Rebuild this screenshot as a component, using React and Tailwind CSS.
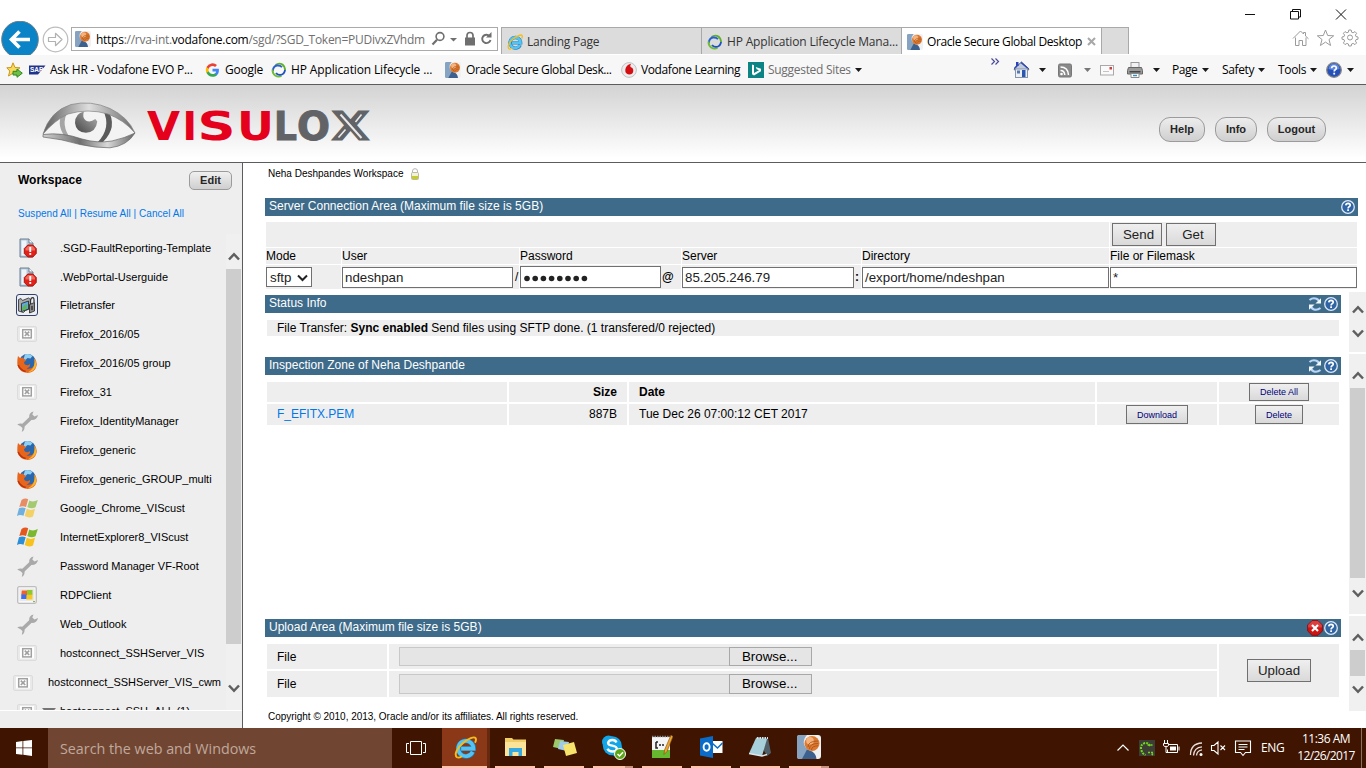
import React from "react";

const segoe = "font-['Open_Sans','Noto_Sans',sans-serif]";

/* ---------- icons ---------- */
function Oracle({ size = 16 }) {
  return (
    <svg width={size} height={size} viewBox="0 0 24 24" className="shrink-0">
      <rect width="24" height="24" rx="3" fill="#f0f1f3" />
      <path d="M2 0h8q-4 4-3 9 .8 3.500 3.500 5l.5 10H2a2 2 0 0 1-2-2V2a2 2 0 0 1 2-2z" fill="#86a3c2" />
      <path d="M10 14.500l3 1q6 2 6.500 8.500H5z" fill="#3c618e" />
      <circle cx="15" cy="8.500" r="7.500" fill="#dd7a31" />
      <circle cx="13" cy="5.800" r="3.800" fill="#f5b27c" />
      <path d="M11 12q0-6 10-6M12.500 13.800q0-5.300 8.800-5.300M14.500 15q0-4 6.500-4.200" stroke="#a34f16" strokeWidth=".8" fill="none" />
    </svg>
  );
}
function IE({ size = 16 }) {
  return (
    <svg width={size} height={size} viewBox="0 0 24 24" className="shrink-0" fill="none">
      <path d="M19.800 16.500A8 8 0 1 1 20.500 13.200H7" stroke="#1f7fbd" strokeWidth="5" />
      <path d="M19.500 16.600A8 8 0 1 1 20.300 13.200H7.500" stroke="#55c3f2" strokeWidth="3.800" />
      <path d="M3.300 22.300C-.5 19.800 3.500 12 9.500 7.200 15 2.800 21 .2 22.500 2.200c.8 1.200.4 3-.6 4.800" stroke="#f5bd1c" strokeWidth="2" />
      <path d="M3.300 22.300q1.700 1 5-1.200" stroke="#f5bd1c" strokeWidth="1.800" />
    </svg>
  );
}
function HP() {
  return (
    <svg width="16" height="16" viewBox="0 0 16 16" className="shrink-0" fill="none">
      <path d="M4.500 3Q8 .5 11.500 2.500q2.800 2.300 2.500 5.500" stroke="#5fae2c" strokeWidth="1.900" />
      <path d="M14 8q-.5 4.200-4.500 5-3 .2-4.500-2" stroke="#1e50c8" strokeWidth="1.900" />
      <path d="M2 9q-.2-4.500 4-5.500 3-.4 5 1.700" stroke="#2b5fd6" strokeWidth="1.900" />
      <path d="M1.500 7.500Q1.500 11.500 4.200 13.500q3 2 6.300.5" stroke="#6fbb35" strokeWidth="1.900" />
    </svg>
  );
}
function Caret({ color = "#1a1a1a" }) {
  return (
    <svg width="7" height="4" viewBox="0 0 7 4" className="shrink-0">
      <path d="M0 0h7L3.500 4z" fill={color} />
    </svg>
  );
}
function HelpDot({ size = 14 }) {
  return (
    <svg width={size} height={size} viewBox="0 0 14 14" className="shrink-0">
      <circle cx="7" cy="7" r="6.300" fill="#2f64a5" stroke="#dde8f5" strokeWidth="1.300" />
      <path d="M4.800 5.400Q5 3.300 7.100 3.300 9.300 3.500 9.200 5.300 9 6.300 7.800 6.900 7.100 7.300 7.100 8.500" stroke="#fff" strokeWidth="1.700" fill="none" />
      <rect x="6.200" y="9.300" width="1.800" height="1.700" fill="#fff" />
    </svg>
  );
}
function Refresh() {
  return (
    <svg width="14" height="14" viewBox="0 0 14 14" className="shrink-0" fill="none">
      <path d="M1.500 3Q5 .3 8.500 1.800 10 2.600 11 4" stroke="#b9d6f7" strokeWidth="2.200" />
      <path d="M13 1.200v5.200H7.400z" fill="#f0f7ff" />
      <path d="M12.500 11Q9 13.700 5.500 12.200 4 11.400 3 10" stroke="#b9d6f7" strokeWidth="2.200" />
      <path d="M1 12.800V7.600h5.600z" fill="#f0f7ff" />
    </svg>
  );
}
function ErrorDot() {
  return (
    <svg width="16" height="16" viewBox="0 0 16 16" className="shrink-0">
      <path d="M5 .7h6L15.300 5v6L11 15.300H5L.7 11V5z" fill="#cf1414" stroke="#8d0d0d" />
      <path d="M5 .9h6L15 5v2.500H1V5z" fill="#e4585a" opacity=".6" />
      <path d="M5 5l6 6M11 5l-6 6" stroke="#fff" strokeWidth="2.200" />
    </svg>
  );
}
function Chevron({ up }) {
  return (
    <svg width="12" height="9" viewBox="0 0 12 9" className="shrink-0">
      <path d={up ? "M1 7.500L6 2.200l5 5.300" : "M1 1.500l5 5.300 5-5.300"} fill="none" stroke="#5f5f5f" strokeWidth="2.500" />
    </svg>
  );
}
function DocIcon() {
  return (
    <svg width="20" height="20" viewBox="0 0 20 20">
      <path d="M3 1h9l4 4v14H3z" fill="#b9c9d9" stroke="#6b8094" />
      <path d="M4.500 2.500h5v15h-5z" fill="#edf4fa" />
      <path d="M12 1v4h4" fill="#fff" stroke="#6b8094" />
      <path d="M10.800 7h5l3.400 3.500v5L15.800 19h-5l-3.500-3.500v-5z" fill="#e32119" stroke="#a8140e" />
      <path d="M11 8h4.500l2.500 2.500v2H8.500v-2z" fill="#f06a5e" />
      <rect x="12.300" y="9" width="1.900" height="5" fill="#fff" />
      <rect x="12.300" y="15" width="1.900" height="1.900" fill="#fff" />
    </svg>
  );
}
function TransferIcon() {
  return (
    <svg width="22" height="22" viewBox="0 0 22 22">
      <rect x=".5" y=".5" width="21" height="21" rx="2.500" fill="#eceef2" stroke="#33406e" />
      <path d="M2.500 5.500l2.500-1 1.500 2 6-2.500 2 1.500v9l-5 2-2 2-5-1.500z" fill="#a9abab" stroke="#3a3a3a" strokeWidth=".9" />
      <path d="M5.500 9.500l7-2.500v8l-7 2.500z" fill="#5faae6" stroke="#222" strokeWidth=".8" />
      <path d="M6 15q1-4 5-5v4.800L6 16.700z" fill="#63b552" />
      <path d="M13.500 10.500l5-2v8.500l-5 2z" fill="#8b8b8b" stroke="#222" strokeWidth=".8" />
      <path d="M14.500 10V6.500Q15 3.500 17 3.700q1.300.3 1 4.800" fill="none" stroke="#333" strokeWidth="1.300" />
      <path d="M16 12v4" stroke="#222" strokeWidth="1.200" />
    </svg>
  );
}
function BrokenIcon() {
  return (
    <svg width="20" height="16" viewBox="0 0 20 16">
      <rect x=".5" y=".5" width="19" height="15" rx="1.500" fill="#e9e9e9" stroke="#dcdcdc" />
      <rect x="3" y="2" width="14" height="11.500" fill="#fff" />
      <rect x="5.700" y="3.700" width="8.600" height="8.200" fill="none" stroke="#a0a0a0" strokeWidth="1.500" />
      <path d="M7.800 5.600l4.400 4.400M12.200 5.600L7.800 10" stroke="#a0a0a0" strokeWidth="1.700" />
    </svg>
  );
}
function FirefoxIcon() {
  return (
    <svg width="20" height="20" viewBox="0 0 20 20">
      <circle cx="10.500" cy="9.500" r="8.500" fill="#2a67ad" />
      <path d="M8 1.500q4-1.500 7.500 1.500l-2 2.500-3-.5-2 2-2-1z" fill="#8fd0f2" />
      <path d="M1 3l2 2 3-.6 1 1.800L9.500 7 7 9.300q.2 3 3.500 3 1.500-.1 2.500-1.200.5 3.500-3.500 4.300 5 1.200 7.800-2.700 1.500-3-.3-7.700 3.500 3.500 2.500 8-1.700 6.500-8.500 6.900Q2 19.400.4 12 0 7 1 3z" fill="#e8661c" />
      <path d="M17.300 5.500q3 4 1.300 9-3 4.500-8.100 5 5.500-3 6.500-7 .8-3.500.3-7z" fill="#f8b62c" />
      <path d="M1.200 12q2 5 7.500 6.500" fill="none" stroke="#b8330d" strokeWidth="1.500" />
    </svg>
  );
}
function WrenchIcon() {
  return (
    <svg width="21" height="21" viewBox="0 0 21 21">
      <path d="M5 15.500L15 6" stroke="#a9a9a9" strokeWidth="3.600" />
      <path d="M16.500.5q-5 1.300-4.200 6l2.500 2.500q5.200 0 6.200-5l-3.500 1.500-2.200-1.900zM.2 13.500q3.800-2.200 7 .4 1.500 4.500-2.400 7L5.500 17 3.500 15.300z" fill="#a9a9a9" />
    </svg>
  );
}
function WindowsFlag({ faded }) {
  return (
    <svg width="21" height="20" viewBox="0 0 21 20" opacity={faded ? 0.65 : 1}>
      <path d="M4.500 2Q8-.4 11.200 1.200L9 9Q5.500 7.300 2.300 9z" fill="#e4581d" />
      <path d="M12.300 2.400Q16 4.600 20.800 2L18.500 9.200q-4 2.300-8.200-.2z" fill="#7cb82f" />
      <path d="M2 10.300Q5.300 8.500 8.700 10.300l-2.200 7.500Q3 16.200-.1 18z" fill="#2c8fd6" />
      <path d="M9.800 10.800Q13.800 13 18 10.800L16 18.500q-4 2-8.300-.5z" fill="#f7c21e" />
    </svg>
  );
}
function RdpIcon() {
  return (
    <svg width="20" height="18" viewBox="0 0 20 18">
      <rect x=".7" y=".7" width="18.600" height="16.600" rx="1.500" fill="#f8f8f8" stroke="#bdbdbd" strokeWidth="1.300" />
      <rect x="2.500" y="2.500" width="15" height="12.500" fill="#e8e8e8" />
      <path d="M4.800 4.500H10V9H4.300z" fill="#f0622b" />
      <path d="M10 4h5.500v5H10z" fill="#8fc82c" />
      <path d="M4.300 8.500H10V13H4.200z" fill="#3c6df0" />
      <path d="M9.500 8.800h6v4.700H9.200z" fill="#f7c524" />
      <rect x="16" y="15" width="2" height="1.200" fill="#8db94a" />
    </svg>
  );
}

/* ---------- browser chrome ---------- */
function BrowserTop() {
  return (
    <div className={`flex h-[55px] shrink-0 items-end bg-white ${segoe}`}>
      <div className="flex h-[34px] w-[71px] shrink-0">
        <svg width="71" height="34" viewBox="0 0 71 34">
          <circle cx="20" cy="18.500" r="18.300" fill="#0a84c6" stroke="#6b7c86" strokeWidth="1" />
          <path d="M30 18.500H12M19.500 10.500l-8 8 8 8" fill="none" stroke="#fff" strokeWidth="3.600" />
          <circle cx="55.500" cy="18.500" r="12.300" fill="#fff" stroke="#bcbcbc" strokeWidth="1.200" />
          <path d="M48.500 16.500h7v-4.200l6.500 6.200-6.500 6.200v-4.200h-7z" fill="#fff" stroke="#b2b2b2" strokeWidth="1.200" strokeLinejoin="round" />
        </svg>
      </div>
      <div className="mb-[4px] flex h-[24px] w-[427px] shrink-0 items-center border border-[#aaaaaa] pl-[3px]">
        <Oracle />
        <div className="ml-[5px] w-[332px] shrink-0 pt-px text-[12px] tracking-[-0.27px] whitespace-nowrap text-[#707070]">
          <span className="text-black">https</span>://rva-int.<span className="text-black">vodafone.com</span>/sgd/?SGD_Token=PUDivxZVhdm
        </div>
        <svg width="70" height="22" viewBox="0 0 70 22" className="shrink-0">
          <circle cx="12" cy="8.500" r="3.900" fill="none" stroke="#6f6f6f" strokeWidth="1.600" />
          <path d="M9 11.800L4.500 16.500" stroke="#6f6f6f" strokeWidth="2.200" />
          <path d="M22 10h7L25.500 13.500z" fill="#6f6f6f" />
          <rect x="37" y="9.500" width="10" height="8" fill="#6f6f6f" />
          <path d="M39 10V7.500q0-3 3-3t3 3V10" fill="none" stroke="#6f6f6f" strokeWidth="1.700" />
          <path d="M61.500 8A4.200 4.200 0 1 0 62.500 12" fill="none" stroke="#6f6f6f" strokeWidth="1.900" />
          <path d="M63.500 4v5.500H58z" fill="#6f6f6f" />
        </svg>
      </div>
      <div className="mb-[1px] ml-[3px] flex h-[27px] w-[628px] shrink-0 border-t border-l border-[#a9a9a9] text-[12px] text-[#333]">
        <div className="flex w-[200px] shrink-0 items-center gap-[4px] border-r border-[#a9a9a9] bg-[#dcdcdc] pt-px pl-[5px]">
          <IE />
          <span className="tracking-[-0.2px] whitespace-nowrap">Landing Page</span>
        </div>
        <div className="flex w-[200px] shrink-0 items-center gap-[4px] border-r border-[#a9a9a9] bg-[#dcdcdc] pt-px pl-[5px]">
          <HP />
          <span className="tracking-[-0.17px] whitespace-nowrap">HP Application Lifecycle Mana...</span>
        </div>
        <div className="flex w-[200px] shrink-0 items-center gap-[4px] border-r border-[#a9a9a9] bg-white pt-px pl-[5px] text-black">
          <Oracle />
          <span className="w-[156px] shrink-0 tracking-[-0.4px] whitespace-nowrap">Oracle Secure Global Desktop</span>
          <svg width="9" height="9" viewBox="0 0 9 9" className="shrink-0"><path d="M1 1l7 7M8 1L1 8" stroke="#a8a8a8" strokeWidth="2.100" /></svg>
        </div>
        <div className="w-[27px] shrink-0 border-r border-[#a9a9a9] bg-[#dcdcdc]" />
      </div>
      <div className="flex h-[55px] grow flex-col items-end">
        <svg width="130" height="28" viewBox="0 0 130 28" fill="none" stroke="#111">
          <path d="M9 14.500h10M54.500 11.500h8v7.500h-8zM56.500 11.500v-2h8v7.500h-2M100 9.500l10 10M110 9.500l-10 10" />
        </svg>
        <svg width="78" height="24" viewBox="0 0 78 24" fill="none" stroke="#9b9b9b">
          <path d="M5 10.500L12.500 3l3 3V4.500h2V8l3 2.800M7.500 9.500v8H11v-5h3.500v5H18v-8" />
          <path d="M37.500 2l2.200 5.500 6 .3-4.700 3.700 1.600 6-5.100-3.400-5.100 3.400 1.600-6-4.700-3.700 6-.3z" />
          <circle cx="62" cy="9.500" r="2.500" />
          <path d="M60.800 2h2.400l.4 2.200 1.500.6 1.900-1.200 1.600 1.700-1.200 1.800.6 1.500 2 .4v2.200l-2 .4-.6 1.500 1.200 1.800-1.600 1.700-1.900-1.200-1.500.6-.4 2h-2.400l-.4-2-1.500-.6-1.900 1.200-1.600-1.700 1.200-1.800-.6-1.500-2-.4V9l2-.4.600-1.500-1.200-1.800L57 3.600l1.900 1.200 1.500-.6z" />
        </svg>
      </div>
    </div>
  );
}

function Favorites() {
  return (
    <div className={`flex h-[30px] shrink-0 items-center border-b border-[#5c5c5c] bg-[#f7f7f7] text-[12px] whitespace-nowrap text-black ${segoe}`}>
      <div className="flex w-[29px] shrink-0 pl-[6px]">
        <svg width="17" height="16" viewBox="0 0 17 16">
          <path d="M7 .8l2 4.700 5 .3-3.800 3.200 1.300 5L7 11.200l-4.500 2.800 1.300-5L.8 5.800l4.400-.3z" fill="#fbd95d" stroke="#c99719" />
          <path d="M7 9.300h4V7l5.300 4.200L11 15.300V13H7z" fill="#6cc04a" stroke="#2d8a21" />
        </svg>
      </div>
      <div className="flex w-[176px] shrink-0 items-center">
        <svg width="17" height="10" viewBox="0 0 17 10" className="mr-[4px] shrink-0">
          <path d="M0 .5h16.500L9 9.500H0z" fill="#22338c" />
          <text x="1" y="7" fontSize="6.500" fontWeight="bold" fill="#fff" fontFamily="Liberation Sans">SAP</text>
        </svg>
        <span className="tracking-[-0.24px]">Ask HR - Vodafone EVO P...</span>
      </div>
      <div className="flex w-[66px] shrink-0 items-center gap-[5px]">
        <svg width="15" height="14" viewBox="0 0 24 24" className="shrink-0">
          <path fill="#4285f4" d="M23 12.300c0-.8-.1-1.600-.2-2.300H12v4.500h6.200a5.300 5.300 0 0 1-2.300 3.500v3h3.700c2.200-2 3.400-5 3.400-8.700z" />
          <path fill="#34a853" d="M12 23.500c3 0 5.700-1 7.600-2.700l-3.700-2.900c-1 .7-2.300 1.100-3.900 1.100-3 0-5.500-2-6.400-4.700H1.800v3A11.500 11.500 0 0 0 12 23.500z" />
          <path fill="#fbbc05" d="M5.600 14.300a7 7 0 0 1 0-4.500v-3H1.800a11.500 11.500 0 0 0 0 10.500z" />
          <path fill="#ea4335" d="M12 5.200c1.700 0 3.200.6 4.400 1.700l3.300-3.300A11.500 11.500 0 0 0 1.800 6.900l3.800 2.900C6.500 7.200 9 5.200 12 5.200z" />
        </svg>
        <span className="tracking-[-0.25px]">Google</span>
      </div>
      <div className="flex w-[174px] shrink-0 items-center gap-[4px]">
        <HP />
        <span className="tracking-[-0.13px]">HP Application Lifecycle ...</span>
      </div>
      <div className="flex w-[176px] shrink-0 items-center gap-[5px]">
        <Oracle />
        <span className="tracking-[-0.4px]">Oracle Secure Global Desk...</span>
      </div>
      <div className="flex w-[127px] shrink-0 items-center gap-[4px]">
        <svg width="16" height="16" viewBox="0 0 16 16" className="shrink-0">
          <circle cx="8" cy="8" r="7.400" fill="#ececec" stroke="#c2c2c2" />
          <path d="M10 1.800Q5 3 4.300 7.500 4 12 8 12.500q4.500 0 4.300-4.500Q12 5.700 9.500 5 8.800 3.500 10 1.800z" fill="#d40f14" />
        </svg>
        <span className="tracking-[-0.38px]">Vodafone Learning</span>
      </div>
      <div className="flex w-[243px] shrink-0 items-center gap-[4px] text-[#6d6d6d]">
        <svg width="16" height="16" viewBox="0 0 16 16" className="shrink-0">
          <rect width="16" height="16" fill="#0c8484" />
          <path d="M4 2.500l2 .7V11l5-2.700-2.300-1-1-2.300L13 6.800v2.500L6 13.500l-2-1.300z" fill="#fff" />
        </svg>
        <span className="tracking-[-0.3px]">Suggested Sites</span>
        <Caret />
      </div>
      <div className="flex h-full w-[22px] shrink-0">
        <svg width="9" height="8" viewBox="0 0 9 8" className="mt-[3px]"><path d="M.5 .5l3 3-3 3M4.500 .5l3 3-3 3" fill="none" stroke="#4a4a9c" strokeWidth="1.200" /></svg>
      </div>
      <svg width="140" height="20" viewBox="1013 60 140 20" className="shrink-0">
        <path d="M1014 69l7.500-7 7.500 7-1 1.500h-13z" fill="#c1cbdc" stroke="#53607a" />
        <rect x="1016" y="62" width="2.500" height="4" fill="#2a42c0" />
        <path d="M1014.500 68.500l3.500-4M1021 62.500l7 6" stroke="#2f48b8" strokeWidth="1.500" />
        <rect x="1015.500" y="69" width="12" height="8.500" fill="#eceff5" stroke="#8894ab" />
        <rect x="1022" y="70" width="3.500" height="7" fill="#2a58b0" />
        <rect x="1017" y="70.500" width="3" height="3" fill="#5878b0" />
        <path d="M1039 68h7l-3.500 4z" fill="#1a1a1a" />
        <rect x="1058.500" y="64" width="13" height="13" rx="1.500" fill="#8a8a8a" stroke="#777" />
        <circle cx="1061.500" cy="74" r="1.300" fill="#fff" />
        <path d="M1060.500 70.500q4 0 4.300 4.500M1060.500 67q7.500 0 8 8" fill="none" stroke="#fff" strokeWidth="1.500" />
        <path d="M1084 68h7l-3.500 4z" fill="#777" />
        <rect x="1100.500" y="65.500" width="13" height="9.500" fill="#fafafa" stroke="#a9a9a9" />
        <path d="M1103 71.500h6" stroke="#c4c4c4" />
        <rect x="1109.500" y="67" width="2.500" height="2.500" fill="#d23c3c" />
        <rect x="1131" y="62.500" width="8" height="6" fill="#f2f2f2" stroke="#999" />
        <path d="M1128.500 67.500h13l1 3v3.500h-15v-3.500z" fill="#9a9a9a" stroke="#666" />
        <rect x="1129.500" y="71" width="11" height="1.500" fill="#444" />
        <path d="M1131 73.500h8v4h-8z" fill="#fff" stroke="#888" />
        <path d="M1133 75.500h4" stroke="#3590c8" strokeWidth="1.500" />
      </svg>
      <div className="flex w-[19px] shrink-0"><Caret /></div>
      <div className="flex w-[50px] shrink-0 items-center justify-between pr-[13px]"><span className="tracking-[-0.5px]">Page</span><Caret /></div>
      <div className="flex w-[56px] shrink-0 items-center justify-between pr-[13px]"><span className="tracking-[-0.35px]">Safety</span><Caret /></div>
      <div className="flex w-[48px] shrink-0 items-center justify-between pr-[9px]"><span className="tracking-[-0.35px]">Tools</span><Caret /></div>
      <svg width="16" height="16" viewBox="0 0 16 16" className="mr-[5px] shrink-0">
        <circle cx="8" cy="8" r="7.300" fill="#2450b8" stroke="#868686" strokeWidth="1.300" />
        <path d="M2.500 7a5.500 5.500 0 0 1 11 0Q8 9 2.500 7z" fill="#5d86dc" />
        <path d="M5.600 6.300Q5.800 4 8 4t2.400 2Q10.400 7 9.200 7.700 8.200 8.300 8.200 9.500" fill="none" stroke="#fff" strokeWidth="1.700" />
        <rect x="7.300" y="10.700" width="1.800" height="1.800" fill="#fff" />
      </svg>
      <Caret />
    </div>
  );
}

/* ---------- site header ---------- */
function Pill({ children, className }) {
  return (
    <div className={`flex h-[25px] items-center justify-center rounded-[11px] border border-[#9b9b9b] bg-linear-to-b from-[#ededed] to-[#cfcfcf] text-[11px] font-bold text-[#262626] ${className}`}>{children}</div>
  );
}
function Header() {
  return (
    <div className="flex h-[78px] shrink-0 items-center justify-between border-b border-[#5b5c60] bg-linear-to-b from-[#d3d3d3] to-white to-95%">
      <svg width="340" height="60" viewBox="40 93 340 60" className="ml-[40px]">
        <defs>
          <linearGradient id="lid" x1="0" x2="1" y1="0" y2="0">
            <stop offset="0" stopColor="#5c5c5c" /><stop offset=".5" stopColor="#dedede" /><stop offset="1" stopColor="#6a6a6a" />
          </linearGradient>
          <linearGradient id="low" x1="0" x2="1" y1="0" y2="0">
            <stop offset="0" stopColor="#cfcfcf" /><stop offset=".4" stopColor="#6f6f6f" /><stop offset=".7" stopColor="#d8d8d8" /><stop offset="1" stopColor="#666" />
          </linearGradient>
          <linearGradient id="pupil" x1="0" x2="1" y1="1" y2="0">
            <stop offset="0" stopColor="#444" /><stop offset="1" stopColor="#b5b5b5" />
          </linearGradient>
        </defs>
        <path d="M44 133Q56 116 71 110.500 90 105 106 110.500 122 116 134 132 124 139 110 141 96 143 80 138 62 132 44 133z" fill="#f3f3f3" />
        <path d="M62 112q-6 13 4 25l5 1q-11-14-3-28z" fill="#a5a5a5" />
        <path d="M103 109q9 18-6 33l6-1q15-15 5-32z" fill="#5b5b5b" />
        <path d="M43 133Q50 110 71 103.500 91 99 110 107.500 128 116 135 132 124 119 108 113 88 107 68 113 55 119 43 133z" fill="url(#lid)" stroke="#838383" strokeWidth=".7" />
        <path d="M43 133.500Q62 131 82 138 97 142.500 112 140 125 137 135 132 127 145 110 146.800 96 147 80 143.500 62 138 43 136z" fill="url(#low)" stroke="#666" strokeWidth=".7" />
        <path d="M84 110.500q-9 2-9 11.500 1 9.500 11 9.800 10-.6 11.300-11.300l-2-2.500q-5 4-9.500 1.500-4-3.500-1.800-9z" fill="url(#pupil)" />
        <g fontFamily="DejaVu Sans" fontWeight="bold" fontSize="39" fill="#e5001c">
          <text x="147" y="138.900" textLength="33" lengthAdjust="spacingAndGlyphs">V</text>
          <text x="182.500" y="138.900">I</text>
          <text x="197.500" y="138.900" textLength="38" lengthAdjust="spacingAndGlyphs">S</text>
          <text x="237" y="138.900" textLength="37" lengthAdjust="spacingAndGlyphs">U</text>
          <g fill="#616366" stroke="#616366" strokeWidth="1">
            <text x="274" y="138.900" textLength="23" lengthAdjust="spacingAndGlyphs">L</text>
            <text x="297" y="138.900" textLength="33" lengthAdjust="spacingAndGlyphs">O</text>
            <text x="331" y="138.900" textLength="39" lengthAdjust="spacingAndGlyphs">X</text>
          </g>
        </g>
        <path d="M340.500 113.500l21 23.500" stroke="#e9e9e9" strokeWidth="2" />
        <path d="M355.500 121L361.500 113.500M338.500 136.500l7-8" stroke="#e9e9e9" strokeWidth="1.600" />
      </svg>
      <div className="mr-[40px] flex pt-[12px]">
        <Pill className="mr-[10px] w-[46px]">Help</Pill>
        <Pill className="mr-[10px] w-[42px]">Info</Pill>
        <Pill className="w-[59px]">Logout</Pill>
      </div>
    </div>
  );
}

/* ---------- sidebar ---------- */
const apps = [
  ["doc", ".SGD-FaultReporting-Template"],
  ["doc", ".WebPortal-Userguide"],
  ["transfer", "Filetransfer"],
  ["broken", "Firefox_2016/05"],
  ["firefox", "Firefox_2016/05 group"],
  ["broken", "Firefox_31"],
  ["wrench", "Firefox_IdentityManager"],
  ["firefox", "Firefox_generic"],
  ["firefox", "Firefox_generic_GROUP_multi"],
  ["winfaded", "Google_Chrome_VIScust"],
  ["win", "InternetExplorer8_VIScust"],
  ["wrench", "Password Manager VF-Root"],
  ["rdp", "RDPClient"],
  ["wrench", "Web_Outlook"],
  ["broken", "hostconnect_SSHServer_VIS"],
];
const icons = {
  doc: <DocIcon />,
  transfer: <TransferIcon />,
  broken: <BrokenIcon />,
  firefox: <FirefoxIcon />,
  wrench: <WrenchIcon />,
  winfaded: <WindowsFlag faded />,
  win: <WindowsFlag />,
  rdp: <RdpIcon />,
};
function Sidebar() {
  return (
    <div className="flex w-[243px] shrink-0 flex-col border-r border-[#5b5c60] bg-[#eeeeee] text-black">
      <div className="flex h-[35px] shrink-0 items-center justify-between pr-[10px] pl-[18px]">
        <span className="pb-[2px] text-[12px] font-bold">Workspace</span>
        <div className="flex h-[19px] w-[43px] items-center justify-center rounded-[5px] border border-[#9b9b9b] bg-linear-to-b from-[#f0f0f0] to-[#cfcfcf] text-[11px] font-bold text-[#262626]">Edit</div>
      </div>
      <div className="flex h-[36px] shrink-0 items-center pb-[5px] pl-[18px] text-[10px] tracking-[0.05px] whitespace-nowrap text-[#0078ea]">Suspend All | Resume All | Cancel All</div>
      <div className="flex h-[476px] shrink-0">
        <div className="flex w-[226px] shrink-0 flex-col overflow-hidden text-[11px] whitespace-nowrap">
          {apps.map(([icon, name], i) => (
            <div key={name} className={`flex shrink-0 items-center ${i === 1 ? "h-[28px]" : "h-[29px]"}`}>
              <div className="flex w-[54px] shrink-0 justify-center pb-px">{icons[icon]}</div>
              <span className="ml-[6px]">{name}</span>
            </div>
          ))}
          <div className="flex h-[29px] shrink-0 items-center">
            <div className="ml-[13px] w-[35px] shrink-0"><BrokenIcon /></div>
            <span>hostconnect_SSHServer_VIS_cwm</span>
          </div>
          <div className="flex h-[29px] shrink-0 items-center">
            <div className="flex w-[60px] shrink-0 items-center pl-[17px]">
              <BrokenIcon />
              <svg width="14" height="8" viewBox="0 0 14 8" className="ml-[5px]"><path d="M0 0h14L7 8z" fill="#757575" /></svg>
            </div>
            <span>hostconnect_SSH_ALL (1)</span>
          </div>
        </div>
        <div className="flex w-[15px] shrink-0 flex-col items-center bg-[#f0f0f0]">
          <div className="flex h-[35px] shrink-0 items-end pb-[8px]"><Chevron up /></div>
          <div className="h-[375px] w-full shrink-0 bg-[#cdcdcd]" />
          <div className="flex pt-[40px]"><Chevron /></div>
        </div>
      </div>
      <div className="h-px shrink-0 bg-white" />
      <div className="grow" />
    </div>
  );
}

/* ---------- main content ---------- */
function Bar({ title, wide, children }) {
  return (
    <div className={`ml-[22px] flex h-[18px] shrink-0 justify-between bg-[#3e6b8a] pr-[3px] pl-[4px] text-[12px] leading-[17px] text-white ${wide ? "w-[1093px]" : "w-[1076px]"}`}>
      <span className="tracking-[0.015px]">{title}</span>
      <div className="flex items-center gap-[2px]">{children}</div>
    </div>
  );
}
function Btn({ className, children }) {
  return (
    <div className={`flex items-center justify-center border border-[#707070] bg-linear-to-b from-[#efefef] to-[#d9d9d9] whitespace-nowrap ${className}`}>{children}</div>
  );
}
function Field({ className, children }) {
  return <div className={`flex items-center border border-[#707070] bg-white pt-px pl-[2px] text-[13.300px] whitespace-nowrap text-[#222] ${className}`}>{children}</div>;
}
function ConnectionForm() {
  const cell = "bg-[#eeeeee]";
  return (
    <div className="ml-[23px] flex w-[1091px] shrink-0 flex-col gap-px pt-[6px] text-[12px] text-black">
      <div className="flex h-[25px] gap-px">
        <div className={`w-[843px] ${cell}`} />
        <div className={`flex w-[247px] gap-[4px] pt-px pl-[2px] text-[13.300px] text-[#222] ${cell}`}>
          <Btn className="h-[23px] w-[50px] pl-[3px]">Send</Btn>
          <Btn className="h-[23px] w-[50px] pl-[4px]">Get</Btn>
        </div>
      </div>
      <div className="flex h-[16px] gap-px leading-[16px]">
        <div className={`w-[75px] ${cell}`}>Mode</div>
        <div className={`w-[177px] ${cell}`}>User</div>
        <div className={`w-[161px] ${cell}`}>Password</div>
        <div className={`w-[179px] ${cell}`}>Server</div>
        <div className={`w-[247px] ${cell}`}>Directory</div>
        <div className={`w-[247px] ${cell}`}>File or Filemask</div>
      </div>
      <div className="flex h-[24px] items-start gap-px">
        <div className={`flex h-full w-[75px] items-start pt-[2px] ${cell}`}>
          <Field className="h-[20px] w-[46px] justify-between pr-[3px] pl-[3px]">
            sftp
            <svg width="11" height="8" viewBox="0 0 11 8"><path d="M1 1.500l4.500 4.500L10 1.500" fill="none" stroke="#222" strokeWidth="2" /></svg>
          </Field>
        </div>
        <div className={`flex h-full w-[177px] items-start pt-[2px] ${cell}`}>
          <Field className="h-[21px] w-[171px]">ndeshpan</Field>
          <span className="pl-[2px] leading-[20px]">/</span>
        </div>
        <div className={`flex h-full w-[161px] items-start pt-px ${cell}`}>
          <Field className="h-[22px] w-[141px] gap-px pl-[3px]">
            <svg width="66" height="8" viewBox="0 0 66 8" fill="#222">
              {[3, 11.200, 19.400, 27.600, 35.800, 44, 52.200, 60.400].map((x) => <circle key={x} cx={x} cy="4.500" r="2.800" />)}
            </svg>
          </Field>
          <b className="pl-[1px] leading-[22px]">@</b>
        </div>
        <div className={`flex h-full w-[179px] items-start pt-[2px] ${cell}`}>
          <Field className="h-[21px] w-[172px]">85.205.246.79</Field>
          <b className="pl-[1px] leading-[20px]">:</b>
        </div>
        <div className={`flex h-full w-[247px] items-start pt-[2px] ${cell}`}><Field className="h-[21px] w-full">/export/home/ndeshpan</Field></div>
        <div className={`flex h-full w-[247px] items-start pt-[2px] ${cell}`}><Field className="h-[21px] w-full">*</Field></div>
      </div>
    </div>
  );
}
function Pane({ className, children, scroll }) {
  return (
    <div className={`flex shrink-0 ${className}`}>
      <div className="flex w-[1106px] shrink-0 flex-col">{children}</div>
      {scroll}
    </div>
  );
}
const track = "flex w-[17px] shrink-0 flex-col items-center bg-[#f0f0f0]";

function FileTable() {
  const c = "bg-[#eeeeee] flex items-center";
  return (
    <div className="mt-[7px] ml-[24px] grid w-[1072px] grid-cols-[240px_118px_466px_120px_120px] grid-rows-[20px_21px] gap-[2px] text-[12px] text-black">
      <div className={c} />
      <div className={`${c} justify-end pr-[10px] font-bold`}>Size</div>
      <div className={`${c} pl-[10px] font-bold`}>Date</div>
      <div className={c} />
      <div className={`${c} justify-center`}><Btn className="h-[18px] w-[60px] pt-px text-[9px] text-[#00007a]">Delete All</Btn></div>
      <div className={`${c} pb-[2px] pl-[10px] text-[#0078ea]`}>F_EFITX.PEM</div>
      <div className={`${c} justify-end pr-[10px] pb-[2px]`}>887B</div>
      <div className={`${c} pb-[2px] pl-[10px]`}>Tue Dec 26 07:00:12 CET 2017</div>
      <div className={`${c} justify-center`}><Btn className="h-[19px] w-[62px] pt-[2px] text-[9px] text-[#00007a]">Download</Btn></div>
      <div className={`${c} justify-center`}><Btn className="h-[19px] w-[48px] pt-[2px] text-[9px] text-[#00007a]">Delete</Btn></div>
    </div>
  );
}
function Picker({ h }) {
  return (
    <div className="flex pl-[10px] text-[13.300px]">
      <div className={`w-[330px] border border-r-0 border-[#c8c8c8] bg-[#e5e5e5] ${h}`} />
      <div className={`flex w-[83px] items-center border border-[#a8a8a8] bg-[#e5e5e5] pl-[12px] ${h}`}>Browse...</div>
    </div>
  );
}
function Main() {
  return (
    <div className="flex grow flex-col overflow-hidden bg-white text-black">
      <div className="flex h-[35px] shrink-0 items-start gap-[8px] pt-[3px] pl-[25px] text-[10px] leading-[16px]">
        Neha Deshpandes Workspace
        <svg width="8" height="12" viewBox="0 0 8 12" className="mt-[2px]">
          <path d="M1.500 5V3q0-2.300 2.500-2.300T6.500 3v2" fill="none" stroke="#b5b5b5" />
          <rect x=".5" y="4.500" width="7" height="7" rx="1" fill="#f2f2dc" stroke="#bcbb9a" />
          <rect x="1" y="8" width="6" height="3" fill="#c6ca32" />
        </svg>
      </div>
      <Bar title="Server Connection Area (Maximum file size is 5GB)" wide><HelpDot /></Bar>
      <ConnectionForm />
      <Pane className="mt-[3px] h-[60px]" scroll={
        <div className={track}>
          <div className="pt-[13px]"><Chevron up /></div>
          <div className="pt-[15px]"><Chevron /></div>
        </div>}>
        <div className="h-[3px] shrink-0" />
        <Bar title="Status Info"><Refresh /><HelpDot /></Bar>
        <div className="mt-[7px] ml-[24px] h-[16px] w-[1072px] bg-[#eeeeee] pl-[10px] text-[12px] leading-[16px] tracking-[0.01px]">File Transfer: <b>Sync enabled</b> Send files using SFTP done. (1 transfered/0 rejected)</div>
      </Pane>
      <Pane className="mt-[2px] h-[260px]" scroll={
        <div className={track}>
          <div className="flex h-[34px] shrink-0 items-start pt-[17px]"><Chevron up /></div>
          <div className="h-[190px] w-[15px] shrink-0 bg-[#cdcdcd]" />
          <div className="pt-[11px]"><Chevron /></div>
        </div>}>
        <div className="h-[3px] shrink-0" />
        <Bar title="Inspection Zone of Neha Deshpande"><Refresh /><HelpDot /></Bar>
        <FileTable />
      </Pane>
      <Pane className="mt-[2px] h-[95px]" scroll={
        <div className={track}>
          <div className="flex h-[34px] shrink-0 items-start pt-[17px]"><Chevron up /></div>
          <div className="h-[26px] w-[15px] shrink-0 bg-[#cdcdcd]" />
          <div className="pt-[9px]"><Chevron /></div>
        </div>}>
        <div className="h-[3px] shrink-0" />
        <Bar title="Upload Area (Maximum file size is 5GB)"><div className="-mr-px flex"><ErrorDot /></div><HelpDot /></Bar>
        <div className="mt-[7px] ml-[24px] flex w-[1072px] gap-[2px] text-[12px]">
          <div className="grid w-[950px] shrink-0 grid-cols-[120px_828px] grid-rows-[25px_26px] gap-[2px]">
            <div className="flex items-center bg-[#eeeeee] pl-[10px]">File</div>
            <div className="flex items-center bg-[#eeeeee]"><Picker h="h-[19px]" /></div>
            <div className="flex items-center bg-[#eeeeee] pl-[10px]">File</div>
            <div className="flex items-center bg-[#eeeeee]"><Picker h="h-[20px]" /></div>
          </div>
          <div className="flex w-[120px] shrink-0 items-center justify-center bg-[#eeeeee]">
            <Btn className="h-[23px] w-[64px] text-[13.300px] text-[#222]">Upload</Btn>
          </div>
        </div>
      </Pane>
      <div className="pl-[25px] text-[10px] leading-[12px] tracking-[-0.02px]">Copyright © 2010, 2013, Oracle and/or its affiliates. All rights reserved.</div>
    </div>
  );
}

/* ---------- taskbar ---------- */
function Task({ children, split, className = "w-[49px]" }) {
  return (
    <div className={`flex h-full shrink-0 flex-col pr-[9px] ${className}`}>
      <div className="flex h-[38px] items-center justify-center">{children}</div>
      <div className="flex h-[2px] w-full">
        <div className="grow bg-[#ffc2aa]" />
        {split && <div className="w-[8px] bg-[#c9927f]" />}
      </div>
    </div>
  );
}
function Taskbar() {
  return (
    <div className={`flex h-[40px] shrink-0 items-center bg-[#3f1400] text-white ${segoe}`}>
      <div className="flex w-[48px] shrink-0 justify-center">
        <svg width="16" height="16" viewBox="0 0 16 16" fill="#fff"><path d="M0 2l6.500-.9v6.400H0zM7.300 1L16 0v7.500H7.300zM0 8.300h6.500v6.400L0 13.900zM7.300 8.300H16V16l-8.700-1.200z" /></svg>
      </div>
      <div className="flex h-full w-[344px] shrink-0 items-center bg-[#704632] pt-px pl-[12px] text-[14.300px] text-[#c0a89c]">Search the web and Windows</div>
      <div className="flex w-[50px] shrink-0 justify-center pr-[2px]">
        <svg width="20" height="14" viewBox="0 0 20 14" fill="none" stroke="#fff"><path d="M4.500.5h11v13h-11zM3 2.500H.5v9H3M17 2.500h2.500v9H17" /></svg>
      </div>
      <div className="mr-[5px] flex h-full w-[48px] shrink-0 flex-col border-r-[3px] border-[#65290f] bg-[#8a3817]">
        <div className="flex h-[38px] items-center pl-[12px]"><IE size={23} /></div>
        <div className="h-[2px] bg-[#ffc2aa]" />
      </div>
      <Task>
        <svg width="23" height="20" viewBox="0 0 23 20">
          <path d="M1 1h7l1.500 1.500H22V19H1z" fill="#f0ce65" /><path d="M1 5h21v14H1z" fill="#fbe49a" />
          <path d="M5 19v-8h13v8h-3.500v-4h-6v4z" fill="#35a9e1" />
        </svg>
      </Task>
      <Task>
        <svg width="25" height="20" viewBox="0 0 25 20">
          <path d="M3 2l9 1-2 9-9-2z" fill="#9cc96b" /><path d="M8 4l9 1-2 9-9-2z" fill="#9ecbe8" /><path d="M11 8l11-3 3 11-11 3z" fill="#f5e36b" />
        </svg>
      </Task>
      <Task split>
        <svg width="25" height="26" viewBox="0 0 25 26">
          <circle cx="7.500" cy="8" r="6.500" fill="#12a5e8" /><circle cx="15" cy="15.500" r="6.500" fill="#12a5e8" /><circle cx="11.300" cy="11.800" r="9.500" fill="#12a5e8" />
          <path d="M15.500 8.500Q14.500 6 11.300 6T7 8.700Q7 11 11.300 11.700 16 12.600 15.800 15 15.300 17.500 11.500 17.500T6.500 14.700" fill="none" stroke="#fff" strokeWidth="2.300" />
          <circle cx="19" cy="20" r="5.500" fill="#5ba616" stroke="#fff" /><path d="M16.500 20l2 2 3.500-3.800" fill="none" stroke="#fff" strokeWidth="1.500" />
        </svg>
      </Task>
      <Task>
        <svg width="22" height="24" viewBox="0 0 22 24">
          <rect x="1" y="2" width="18" height="21" fill="#f4f4f4" /><path d="M1 1.500h18" stroke="#888" strokeWidth="1.500" strokeDasharray="1.500 1" /><path d="M1 15h18v8H1z" fill="#66b82e" />
          <path d="M5 7h2M5 7v6h2" fill="none" stroke="#222" strokeWidth="1.500" /><path d="M8 10h6" stroke="#222" strokeWidth="1.500" strokeDasharray="2 1" />
          <path d="M20 0l2 1.500-6 15-3 3 .5-4.500z" fill="#eba52f" stroke="#7c4b10" strokeWidth=".6" />
        </svg>
      </Task>
      <Task>
        <svg width="23" height="22" viewBox="0 0 23 22">
          <path d="M12 5h10.500v12H12z" fill="#fff" /><path d="M12 7l5.500 5 5-5" fill="none" stroke="#0a6cc8" strokeWidth="1.500" />
          <path d="M0 2.500L13 0v22L0 19.500z" fill="#0a6cc8" /><ellipse cx="6.600" cy="11" rx="3" ry="3.700" fill="none" stroke="#fff" strokeWidth="1.900" />
        </svg>
      </Task>
      <Task>
        <svg width="24" height="22" viewBox="0 0 24 22">
          <path d="M8 1l12 1 3 15-4 3z" fill="#506068" /><path d="M8 2l11 1-5 17L1 17.500z" fill="#a8d0da" /><path d="M1 17.500L14 20l5-1.500" fill="none" stroke="#dce8ec" strokeWidth="1.500" />
          <path d="M9 2h11" stroke="#d9e3e6" strokeWidth="2" strokeDasharray="1.500 1" />
        </svg>
      </Task>
      <Task split><Oracle size={24} /></Task>
      <svg width="138" height="20" viewBox="1115 738 138 20" fill="none" className="mr-[8px] ml-[277px] shrink-0">
        <path d="M1117.500 750.500l5.500-5.500 5.500 5.500" stroke="#fff" strokeWidth="1.200" />
        <rect x="1139" y="740" width="16" height="16" fill="#3d3d36" />
        <path d="M1150 746q-2-3.500-5-3-4.500 1.500-4 5.500.8 5 4.500 6.500" stroke="#72d51e" strokeWidth="2" strokeDasharray="2 1" />
        <path d="M1147.500 745h6M1148 752.500h5l-1 3" stroke="#72d51e" strokeWidth="1.600" strokeDasharray="2 1" />
        <path d="M1168.500 744.500h9v8h-10v-3M1179 746.500v4M1164.500 740v3M1167.500 740v3M1163.500 743.500h5v2q0 1-2.500 1t-2.500-1zM1166 747v5.500h2" stroke="#fff" />
        <rect x="1170" y="746.500" width="6" height="4" fill="#fff" />
        <path d="M1190.500 755q0-11.500 11.500-12M1193.500 755.500q.5-8 8.500-8.700M1196.500 755.500q.5-5 5.500-5.700" stroke="#e8ded9" strokeWidth="1.300" />
        <circle cx="1201" cy="754.500" r="1.500" fill="#fff" />
        <path d="M1211.500 745.500h2.500l4-3.500v12l-4-3.500h-2.500zM1220.500 745.500l4.500 4.500M1225 745.500l-4.500 4.500" stroke="#fff" strokeWidth="1.100" />
        <path d="M1235.500 741h15v11.500h-5l-2.500 3-2.500-3h-5zM1238.500 744.500h9M1238.500 747h9M1238.500 749.500h6" stroke="#fff" strokeWidth="1.100" />
      </svg>
      <div className="w-[36px] shrink-0 text-[12px] tracking-[-0.4px]">ENG</div>
      <div className="flex h-full w-[58px] shrink-0 flex-col items-center justify-center pb-[2px] text-[12px] leading-[17px] whitespace-nowrap">
        <span className="tracking-[-0.5px]">11:36 AM</span>
        <span className="tracking-[-0.6px]">12/26/2017</span>
      </div>
      <div className="ml-[6px] h-full w-px shrink-0 bg-[#8a7060]" />
    </div>
  );
}

export default function App() {
  return (
    <div className="flex h-[768px] w-[1366px] flex-col overflow-hidden bg-white font-['Liberation_Sans',Arial,sans-serif]">
      <BrowserTop />
      <Favorites />
      <Header />
      <div className="flex h-[565px] shrink-0">
        <Sidebar />
        <Main />
      </div>
      <Taskbar />
    </div>
  );
}
